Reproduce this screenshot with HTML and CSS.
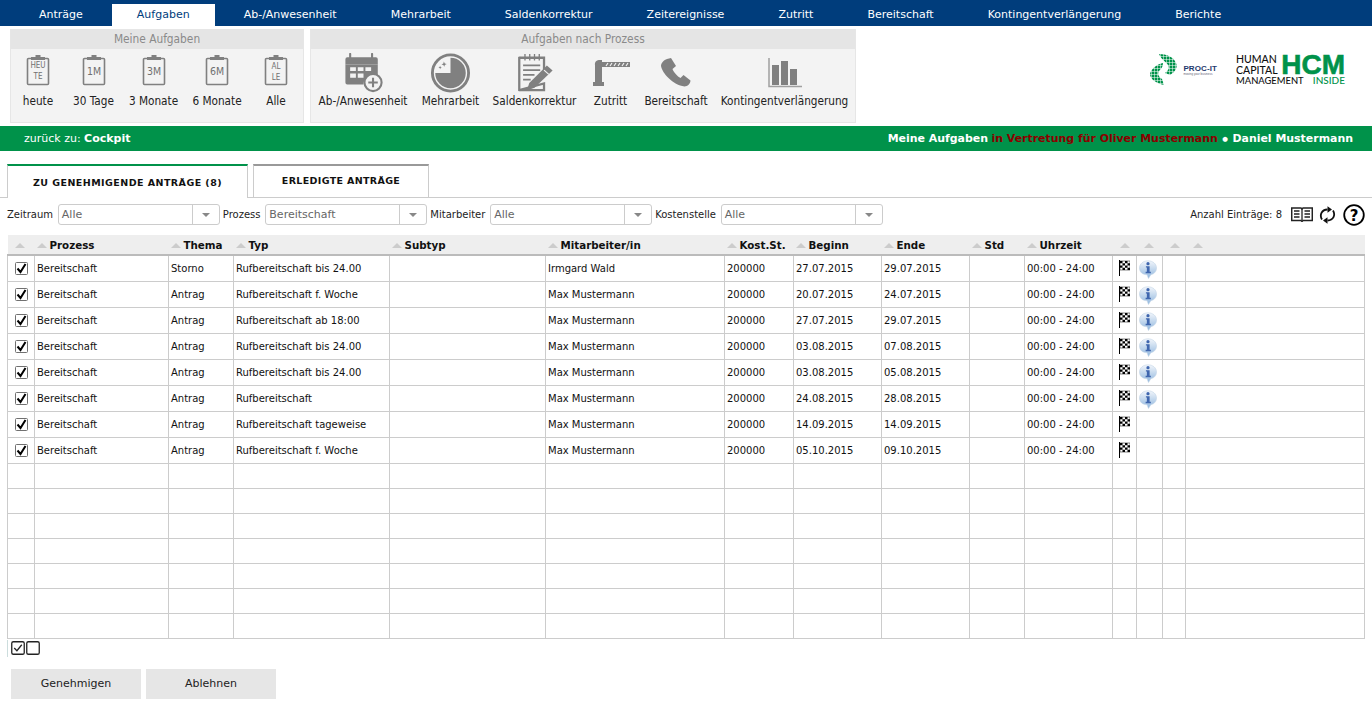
FILE: index.html
```html
<!DOCTYPE html>
<html lang="de">
<head>
<meta charset="utf-8">
<title>Aufgaben</title>
<link rel="stylesheet" href="styles.css">
</head>
<body>
<svg class="defs" width="0" height="0">
  <symbol id="clip" viewBox="0 0 24 32">
    <path d="M2.500 4.500h19a1 1 0 0 1 1 1v24a1 1 0 0 1-1 1h-19a1 1 0 0 1-1-1v-24a1 1 0 0 1 1-1z" fill="none" stroke="#808080" stroke-width="1.600"/>
    <path d="M5 5V3h4.500V1h5v2H19v3H5z" fill="#808080"/>
  </symbol>
  <symbol id="check" viewBox="0 0 13 13">
    <rect x=".5" y=".5" width="12" height="12" rx="1" fill="#fff" stroke="#707070"/>
    <path d="M2.500 6.500l3 3.500 5-8" fill="none" stroke="#000" stroke-width="2"/>
  </symbol>
  <symbol id="flag" viewBox="0 0 12 16">
    <path d="M1 0h1v16H1z" fill="#000"/>
    <path d="M2 1h10v9H2z" fill="#fff" stroke="#000" stroke-width=".5"/>
    <path d="M2 1h2.500v2.250H2zM7 1h2.500v2.250H7zM4.500 3.250H7V5.500H4.500zM9.500 3.250H12V5.500H9.500zM2 5.500h2.500v2.250H2zM7 5.500h2.500v2.250H7zM4.500 7.750H7V10H4.500zM9.500 7.750H12V10H9.500z" fill="#000"/>
  </symbol>
  <symbol id="info" viewBox="0 0 19 20">
    <defs>
      <linearGradient id="ig" x1="0" y1="0" x2="0" y2="1">
        <stop offset="0" stop-color="#f2f6fb"/>
        <stop offset="1" stop-color="#8fb6de"/>
      </linearGradient>
    </defs>
    <path d="M9.500 .8C14.500 .8 18.500 4 18.500 8.500S15 15 12.500 15.500L10 19.500 8.500 15.500C4 15.500 .5 13 .5 8.500S4.500 .8 9.500 .8z" fill="url(#ig)" stroke="#c3d4e6" stroke-width=".6"/>
    <circle cx="9.500" cy="3.800" r="1.700" fill="#3f66ae"/>
    <path d="M7.300 6.500h3.900v6h1.300V14H7v-1.500h1.300V8H7.300z" fill="#3f66ae"/>
  </symbol>
  <pattern id="dots" width="3" height="3" patternUnits="userSpaceOnUse">
    <rect width="2.500" height="2.500" fill="#00924a"/>
  </pattern>
</svg>

<nav class="topnav">
  <a class="navitem">Anträge</a>
  <a class="navitem active">Aufgaben</a>
  <a class="navitem">Ab-/Anwesenheit</a>
  <a class="navitem">Mehrarbeit</a>
  <a class="navitem">Saldenkorrektur</a>
  <a class="navitem">Zeitereignisse</a>
  <a class="navitem">Zutritt</a>
  <a class="navitem">Bereitschaft</a>
  <a class="navitem">Kontingentverlängerung</a>
  <a class="navitem">Berichte</a>
</nav>

<header class="ribbon">
  <section class="panel p1">
    <h2 class="panel-title">Meine Aufgaben</h2>
    <div class="panel-body b1">
      <div class="tool t-heute">
        <svg class="clip" viewBox="0 0 24 32"><use href="#clip"/><text class="ct" x="12" y="14">HEU</text><text class="ct" x="12" y="25">TE</text></svg>
        <span>heute</span>
      </div>
      <div class="tool t-30">
        <svg class="clip" viewBox="0 0 24 32"><use href="#clip"/><text class="cb" x="12" y="21">1M</text></svg>
        <span>30 Tage</span>
      </div>
      <div class="tool t-3">
        <svg class="clip" viewBox="0 0 24 32"><use href="#clip"/><text class="cb" x="12" y="21">3M</text></svg>
        <span>3 Monate</span>
      </div>
      <div class="tool t-6">
        <svg class="clip" viewBox="0 0 24 32"><use href="#clip"/><text class="cb" x="12" y="21">6M</text></svg>
        <span>6 Monate</span>
      </div>
      <div class="tool t-alle">
        <svg class="clip" viewBox="0 0 24 32"><use href="#clip"/><text class="ct" x="12" y="15">AL</text><text class="ct" x="12" y="26">LE</text></svg>
        <span>Alle</span>
      </div>
    </div>
  </section>
  <section class="panel p2">
    <h2 class="panel-title">Aufgaben nach Prozess</h2>
    <div class="panel-body b2">
      <div class="tool t-ab">
        <svg class="big" viewBox="0 0 42 42">
          <path d="M2 6.500a2 2 0 0 1 2-2h30a2 2 0 0 1 2 2V12H2z" fill="#808080"/>
          <path d="M5 12h31v12H26a11 11 0 0 0-5 9H4a2 2 0 0 1-2-2V12z" fill="#808080"/>
          <path d="M7 15h6v4H7zM15 15h6v4h-6zM23 15h6v4h-6zM7 21.500h6v4.500H7zM15 21.500h6v4.500h-6z" fill="#f3f3f3"/>
          <path d="M7 1v7M30 1v7" stroke="#808080" stroke-width="2.200" stroke-linecap="round"/>
          <circle cx="31" cy="31" r="9" fill="#f3f3f3" stroke="#808080" stroke-width="2.200"/>
          <path d="M31 26v10M26 31h10" stroke="#808080" stroke-width="2.200"/>
        </svg>
        <span>Ab-/Anwesenheit</span>
      </div>
      <div class="tool t-mehr">
        <svg class="big" viewBox="0 0 42 42">
          <circle cx="21" cy="21" r="19" fill="none" stroke="#808080" stroke-width="3"/>
          <path d="M21 5a16 16 0 1 1-16 16h16z" fill="#808080"/>
          <path d="M14 9l1 2 2 .5-2 1-.5 2-1-2-2-.5 2-1zM10 13.500l.6 1.300 1.300.4-1.300.6-.4 1.300-.6-1.300-1.300-.4 1.300-.6z" fill="#808080"/>
        </svg>
        <span>Mehrarbeit</span>
      </div>
      <div class="tool t-sal">
        <svg class="big" viewBox="0 0 42 42">
          <path d="M5 5h26v14M31 32v7H5z" fill="none" stroke="#808080" stroke-width="2.400"/>
          <path d="M5 4v36" stroke="#808080" stroke-width="2.400"/>
          <path d="M11 1v7M16 1v7M21 1v7M26 1v7" stroke="#808080" stroke-width="1.400"/>
          <path d="M9 13h18M9 18h18M9 23h12M9 28h8" stroke="#808080" stroke-width="2"/>
          <path d="M34 13l6 5.500-19 18-8 3 2.500-8z" fill="#808080"/>
          <path d="M31 18l5 4.500" stroke="#f3f3f3" stroke-width="1.200"/>
        </svg>
        <span>Saldenkorrektur</span>
      </div>
      <div class="tool t-zut">
        <svg class="barrier" viewBox="0 0 38 26">
          <path d="M3 5a4 4 0 0 1 4-5h3v24H3z" fill="#808080"/>
          <path d="M1 22h11v4H1z" fill="#808080"/>
          <path d="M10 2h28v5H10z" fill="#808080"/>
          <path d="M14 6l2-3M18 6l2-3M22 6l2-3M26 6l2-3M30 6l2-3M34 6l2-3" stroke="#f3f3f3" stroke-width="1.200"/>
        </svg>
        <span>Zutritt</span>
      </div>
      <div class="tool t-ber">
        <svg class="phone" viewBox="0 0 30 30">
          <path d="M6 1l4-1 5 8-3.500 3c1 3 5 7.500 8 9l3-3 7 5.500c0 3-3 6-6 6C12 27 1 15 0 8c0-3 3-6 6-7z" fill="#808080"/>
        </svg>
        <span>Bereitschaft</span>
      </div>
      <div class="tool t-kon">
        <svg class="chart" viewBox="0 0 34 30">
          <path d="M1 0v28.500h33" fill="none" stroke="#a0a0a0" stroke-width="1.500"/>
          <path d="M4 7h7v20H4zM13 3h7v24h-7zM22 11h7v16h-7z" fill="#808080"/>
        </svg>
        <span>Kontingentverlängerung</span>
      </div>
    </div>
  </section>
  <div class="logos">
    <div class="procit">
      <svg class="globe" viewBox="0 0 28 31">
        <path d="M10 0c7 0 15 3 17 9 2 5-1 9-6 12l-5-2c3-2 5-5 3-8-2-3-7-6-9-11z" fill="url(#dots)"/>
        <path d="M14 9c-5 1-12 5-13 11 0 5 6 9 14 11l-2-6c-3-2-5-5-3-8 2-2 4-4 4-8z" fill="url(#dots)"/>
      </svg>
      <div class="procit-text"><b>PROC-IT</b><small>moving your business</small></div>
    </div>
    <div class="hcm">
      <div class="hcm-row">
        <div class="hcm-words"><span>HUMAN</span><span>CAPITAL</span></div>
        <b class="hcm-mark">HCM</b>
      </div>
      <div class="hcm-row hcm-low">
        <span class="hcm-man">MANAGEMENT</span>
        <span class="hcm-ins">INSIDE</span>
      </div>
    </div>
  </div>
</header>

<div class="greenbar">
  <div class="back">zurück zu: <b>Cockpit</b></div>
  <div class="context"><b>Meine Aufgaben</b> <b class="red">in Vertretung für Oliver Mustermann</b> <b class="dot">●</b> <b>Daniel Mustermann</b></div>
</div>

<div class="tabs">
  <div class="tab on">ZU GENEHMIGENDE ANTRÄGE (8)</div>
  <div class="tab off">ERLEDIGTE ANTRÄGE</div>
</div>

<div class="filters">
  <label class="flabel">Zeitraum</label>
  <div class="combo"><span>Alle</span><i></i></div>
  <label class="flabel">Prozess</label>
  <div class="combo"><span>Bereitschaft</span><i></i></div>
  <label class="flabel">Mitarbeiter</label>
  <div class="combo"><span>Alle</span><i></i></div>
  <label class="flabel">Kostenstelle</label>
  <div class="combo"><span>Alle</span><i></i></div>
  <div class="filters-right">
    <span class="count">Anzahl Einträge: 8</span>
    <svg class="i-book" viewBox="0 0 22 15">
      <path d="M.7 1h9.300l1 1 1-1h9.300v12.500H12l-1 1-1-1H.7z" fill="none" stroke="#222" stroke-width="1.500"/>
      <path d="M11 2v11M3 4h5.500M3 7h5.500M3 10h5.500M13.500 4H19M13.500 7H19M13.500 10H19" stroke="#222" stroke-width="1.300"/>
    </svg>
    <svg class="i-ref" viewBox="0 0 16 20">
      <path d="M2.500 14.500C-.2 10 2 4.800 8 4.500M13.500 5.500C16.200 10 14 15.200 8 15.500" fill="none" stroke="#111" stroke-width="1.800"/>
      <path d="M8 1.200v6.600l4.500-3.300zM8 18.800v-6.600l-4.500 3.300z" fill="#111"/>
    </svg>
    <svg class="i-help" viewBox="0 0 22 22">
      <circle cx="11" cy="11" r="9.800" fill="#fff" stroke="#000" stroke-width="1.800"/>
      <text x="11" y="16.500" class="qm">?</text>
    </svg>
  </div>
</div>

<table class="grid">
  <colgroup>
    <col class="c1"><col class="c2"><col class="c3"><col class="c4"><col class="c5"><col class="c6"><col class="c7"><col class="c8"><col class="c9"><col class="c10"><col class="c11"><col class="c12"><col class="c13"><col class="c14"><col class="c15">
  </colgroup>
  <thead>
    <tr>
      <th class="so"></th><th>Prozess</th><th>Thema</th><th>Typ</th><th>Subtyp</th><th>Mitarbeiter/in</th><th>Kost.St.</th><th>Beginn</th><th>Ende</th><th>Std</th><th>Uhrzeit</th><th class="so"></th><th class="so"></th><th class="so"></th><th class="so"></th>
    </tr>
  </thead>
  <tbody>
    <tr><td class="ck"><svg class="cb-i"><use href="#check"/></svg></td><td>Bereitschaft</td><td>Storno</td><td>Rufbereitschaft bis 24.00</td><td></td><td>Irmgard Wald</td><td>200000</td><td>27.07.2015</td><td>29.07.2015</td><td></td><td>00:00 - 24:00</td><td class="ic"><svg class="fl"><use href="#flag"/></svg></td><td class="ic"><svg class="in"><use href="#info"/></svg></td><td></td><td></td></tr>
    <tr><td class="ck"><svg class="cb-i"><use href="#check"/></svg></td><td>Bereitschaft</td><td>Antrag</td><td>Rufbereitschaft f. Woche</td><td></td><td>Max Mustermann</td><td>200000</td><td>20.07.2015</td><td>24.07.2015</td><td></td><td>00:00 - 24:00</td><td class="ic"><svg class="fl"><use href="#flag"/></svg></td><td class="ic"><svg class="in"><use href="#info"/></svg></td><td></td><td></td></tr>
    <tr><td class="ck"><svg class="cb-i"><use href="#check"/></svg></td><td>Bereitschaft</td><td>Antrag</td><td>Rufbereitschaft ab 18:00</td><td></td><td>Max Mustermann</td><td>200000</td><td>27.07.2015</td><td>29.07.2015</td><td></td><td>00:00 - 24:00</td><td class="ic"><svg class="fl"><use href="#flag"/></svg></td><td class="ic"><svg class="in"><use href="#info"/></svg></td><td></td><td></td></tr>
    <tr><td class="ck"><svg class="cb-i"><use href="#check"/></svg></td><td>Bereitschaft</td><td>Antrag</td><td>Rufbereitschaft bis 24.00</td><td></td><td>Max Mustermann</td><td>200000</td><td>03.08.2015</td><td>07.08.2015</td><td></td><td>00:00 - 24:00</td><td class="ic"><svg class="fl"><use href="#flag"/></svg></td><td class="ic"><svg class="in"><use href="#info"/></svg></td><td></td><td></td></tr>
    <tr><td class="ck"><svg class="cb-i"><use href="#check"/></svg></td><td>Bereitschaft</td><td>Antrag</td><td>Rufbereitschaft bis 24.00</td><td></td><td>Max Mustermann</td><td>200000</td><td>03.08.2015</td><td>05.08.2015</td><td></td><td>00:00 - 24:00</td><td class="ic"><svg class="fl"><use href="#flag"/></svg></td><td class="ic"><svg class="in"><use href="#info"/></svg></td><td></td><td></td></tr>
    <tr><td class="ck"><svg class="cb-i"><use href="#check"/></svg></td><td>Bereitschaft</td><td>Antrag</td><td>Rufbereitschaft</td><td></td><td>Max Mustermann</td><td>200000</td><td>24.08.2015</td><td>28.08.2015</td><td></td><td>00:00 - 24:00</td><td class="ic"><svg class="fl"><use href="#flag"/></svg></td><td class="ic"><svg class="in"><use href="#info"/></svg></td><td></td><td></td></tr>
    <tr><td class="ck"><svg class="cb-i"><use href="#check"/></svg></td><td>Bereitschaft</td><td>Antrag</td><td>Rufbereitschaft tageweise</td><td></td><td>Max Mustermann</td><td>200000</td><td>14.09.2015</td><td>14.09.2015</td><td></td><td>00:00 - 24:00</td><td class="ic"><svg class="fl"><use href="#flag"/></svg></td><td></td><td></td><td></td></tr>
    <tr><td class="ck"><svg class="cb-i"><use href="#check"/></svg></td><td>Bereitschaft</td><td>Antrag</td><td>Rufbereitschaft f. Woche</td><td></td><td>Max Mustermann</td><td>200000</td><td>05.10.2015</td><td>09.10.2015</td><td></td><td>00:00 - 24:00</td><td class="ic"><svg class="fl"><use href="#flag"/></svg></td><td></td><td></td><td></td></tr>
    <tr class="empty"><td></td><td></td><td></td><td></td><td></td><td></td><td></td><td></td><td></td><td></td><td></td><td></td><td></td><td></td><td></td></tr>
    <tr class="empty"><td></td><td></td><td></td><td></td><td></td><td></td><td></td><td></td><td></td><td></td><td></td><td></td><td></td><td></td><td></td></tr>
    <tr class="empty"><td></td><td></td><td></td><td></td><td></td><td></td><td></td><td></td><td></td><td></td><td></td><td></td><td></td><td></td><td></td></tr>
    <tr class="empty"><td></td><td></td><td></td><td></td><td></td><td></td><td></td><td></td><td></td><td></td><td></td><td></td><td></td><td></td><td></td></tr>
    <tr class="empty"><td></td><td></td><td></td><td></td><td></td><td></td><td></td><td></td><td></td><td></td><td></td><td></td><td></td><td></td><td></td></tr>
    <tr class="empty"><td></td><td></td><td></td><td></td><td></td><td></td><td></td><td></td><td></td><td></td><td></td><td></td><td></td><td></td><td></td></tr>
    <tr class="empty"><td></td><td></td><td></td><td></td><td></td><td></td><td></td><td></td><td></td><td></td><td></td><td></td><td></td><td></td><td></td></tr>
  </tbody>
</table>

<div class="selectall">
  <svg class="sa" viewBox="0 0 13 13"><rect x=".7" y=".7" width="11.600" height="11.600" rx="1.500" fill="#fff" stroke="#222" stroke-width="1.200"/><path d="M3 6.500l2.500 2.500 4.500-5.500" fill="none" stroke="#222" stroke-width="1.200"/></svg>
  <svg class="sa" viewBox="0 0 13 13"><rect x=".7" y=".7" width="11.600" height="11.600" rx="1.500" fill="#fff" stroke="#222" stroke-width="1.200"/></svg>
</div>

<div class="actions">
  <button class="btn">Genehmigen</button>
  <button class="btn">Ablehnen</button>
</div>
</body>
</html>
```
FILE: styles.css
```css
* { box-sizing: border-box; }
html, body { margin: 0; padding: 0; }
body { width: 1372px; height: 711px; overflow: hidden; background: #fff; font-family: "DejaVu Sans", Verdana, sans-serif; font-size: 10px; color: #222; }
.defs { position: absolute; }

.topnav { height: 26px; background: #003d7c; display: flex; align-items: flex-end; padding-left: 14px; gap: 4px; }
.navitem { height: 22px; line-height: 21px; padding: 0 25px; font-size: 11px; color: #fff; white-space: nowrap; }
.navitem.active { background: #fff; color: #003d7c; }

.ribbon { height: 100px; display: flex; padding: 3px 0 3px 10px; gap: 6px; }
.panel { height: 94px; background: #f3f3f3; border: 1px solid #e6e6e6; display: flex; flex-direction: column; }
.p1 { width: 294px; }
.p2 { width: 546px; }
.panel-title { margin: 0; height: 19px; background: #e5e5e5; font-family: "DejaVu Sans Condensed", "DejaVu Sans", sans-serif; font-stretch: condensed; font-weight: normal; font-size: 11.800px; line-height: 18px; color: #8a8a8a; text-align: center; }
.panel-body { flex: 1; display: flex; }
.tool { display: flex; flex-direction: column; align-items: center; font-family: "DejaVu Sans Condensed", "DejaVu Sans", sans-serif; font-stretch: condensed; font-size: 11.700px; color: #222; white-space: nowrap; }
.tool span { display: block; line-height: 15px; padding-top: 1px; }
.b1 { padding: 5px 0 0 12px; }
.b2 { padding: 4px 0 0 7px; }
.clip { width: 24px; height: 32px; margin-bottom: 7px; display: block; flex: none; }
.ct { font-family: "DejaVu Sans Condensed", "DejaVu Sans", sans-serif; font-size: 8px; fill: #707070; text-anchor: middle; }
.cb { font-family: "DejaVu Sans Condensed", "DejaVu Sans", sans-serif; font-size: 10.500px; fill: #707070; text-anchor: middle; }
.t-heute { width: 30px; }
.t-30 { width: 43px; margin-left: 19px; }
.t-3 { width: 49px; margin-left: 14px; }
.t-6 { width: 50px; margin-left: 14px; }
.t-alle { width: 20px; margin-left: 24px; }
.big { width: 41px; height: 40px; display: block; flex: none; }
.t-ab { width: 90px; }
.t-mehr { width: 57px; margin-left: 14px; }
.t-sal { width: 85px; margin-left: 13px; }
.t-zut { width: 33px; margin-left: 17px; }
.t-ber { width: 62px; margin-left: 18px; }
.t-kon { width: 127px; margin-left: 14px; }
.barrier { width: 38px; height: 26px; margin: 7px 0; display: block; flex: none; }
.phone { width: 30px; height: 30px; margin: 5px 0; display: block; flex: none; }
.chart { width: 34px; height: 30px; margin: 5px 0; display: block; flex: none; }

.logos { margin-left: auto; display: flex; align-items: flex-start; padding: 25px 27px 0 0; gap: 19px; }
.procit { display: flex; align-items: center; gap: 6px; height: 31px; }
.globe { width: 28px; height: 31px; }
.procit-text { display: flex; flex-direction: column; line-height: 1; padding-top: 2px; }
.procit-text b { font-family: "Liberation Sans", sans-serif; font-size: 8px; color: #1f3a6e; letter-spacing: .1px; }
.procit-text small { font-family: "Liberation Sans", sans-serif; font-size: 3px; color: #667; }
.hcm { width: 109px; display: flex; flex-direction: column; font-family: "Lato", "Liberation Sans", sans-serif; }
.hcm-row { display: flex; justify-content: space-between; }
.hcm-words { display: flex; flex-direction: column; font-size: 10.500px; line-height: 11px; color: #111; font-weight: 500; }
.hcm-mark { font-family: "Liberation Sans", sans-serif; font-size: 28px; line-height: 22px; height: 22px; color: #00924a; -webkit-text-stroke: .6px #00924a; }
.hcm-low { line-height: 9px; }
.hcm-man { font-size: 9.400px; color: #111; font-weight: 500; }
.hcm-ins { font-size: 10px; color: #00924a; font-weight: 500; }

.greenbar { height: 25px; background: #00924a; color: #fff; display: flex; justify-content: space-between; align-items: center; padding: 0 19px 1px 24px; white-space: nowrap; }
.back { font-size: 11px; }
.context { font-size: 10.950px; }
.red { color: #8b0000; }
.dot { font-size: 6.500px; vertical-align: 1px; margin: 0 1px; }

.tabs { height: 47px; padding: 13px 0 0 7px; display: flex; gap: 5px; border-bottom: 1px solid #ccc; }
.tab { background: #fff; font-size: 9.500px; font-weight: bold; letter-spacing: .45px; color: #111; text-align: center; border: 1px solid #ccc; border-bottom: none; }
.tab.on { width: 241px; height: 34px; border-top: 2px solid #00924a; line-height: 33px; }
.tab.off { width: 176px; height: 33px; border-top: 2px solid #999; line-height: 30px; letter-spacing: .35px; }

.filters { display: flex; align-items: center; height: 21px; margin-top: 6px; padding-left: 7px; }
.flabel { font-size: 10px; color: #222; margin-right: 4.800px; white-space: nowrap; }
.combo { width: 162px; height: 21px; border: 1px solid #ccc; border-radius: 3px; display: flex; align-items: center; justify-content: space-between; padding-left: 3px; margin-right: 3px; background: #fff; font-size: 11px; color: #666; }
.combo span { line-height: 18px; }
.combo i { width: 27px; height: 19px; border-left: 1px solid #ccc; position: relative; flex: none; }
.combo i::after { content: ""; position: absolute; left: 9px; top: 8px; border-style: solid; border-width: 4px 4px 0; border-color: #888 transparent transparent; }
.filters-right { margin-left: auto; display: flex; align-items: center; padding-right: 7px; }
.count { font-size: 10px; margin-right: 9px; color: #222; }
.i-book { width: 22px; height: 15px; margin-right: 6px; }
.i-ref { width: 17px; height: 20px; margin-right: 7px; }
.i-help { width: 22px; height: 22px; }
.qm { font-family: "DejaVu Sans", sans-serif; font-weight: bold; font-size: 15px; text-anchor: middle; fill: #000; }

.grid { margin: 10px 0 0 7px; border-collapse: collapse; table-layout: fixed; width: 1357px; font-size: 10px; color: #111; }
.c1 { width: 27px; } .c2 { width: 134px; } .c3 { width: 65px; } .c4 { width: 156px; } .c5 { width: 156px; } .c6 { width: 179px; } .c7 { width: 69px; } .c8 { width: 88px; } .c9 { width: 88px; } .c10 { width: 55px; } .c11 { width: 88px; } .c12 { width: 24px; } .c13 { width: 26px; } .c14 { width: 23px; } .c15 { width: 179px; }
.grid th { height: 20px; background: #eee; border-bottom: 2px solid #bbb; text-align: left; font-size: 10.300px; font-weight: bold; padding: 1px 0 0 2px; color: #111; white-space: nowrap; }
.grid th::before { content: ""; display: inline-block; border-style: solid; border-width: 0 5.500px 5px; border-color: transparent transparent #ccc; margin: 0 3px 1px 0; }
.grid th.so { padding-left: 7px; }
.grid td { height: 26px; border: 1px solid #ccc; padding: 0 0 0 2px; white-space: nowrap; overflow: hidden; }
.grid .empty td { height: 25px; }
.grid td.ck { padding: 0 0 0 7px; }
.grid td.ic { padding: 0 0 0 2px; vertical-align: top; }
.cb-i { width: 13px; height: 13px; display: block; }
.fl { width: 12px; height: 16px; display: block; margin: 4px 0 0 3px; }
.in { width: 18px; height: 19px; display: block; margin: 4px 0 0 0; }

.selectall { display: flex; gap: 1px; height: 17px; align-items: center; padding-left: 3px; margin: 1px 0 0 7px; border-left: 1px solid #cdd; width: 50px; }
.sa { width: 14px; height: 14px; }
.actions { display: flex; gap: 5px; padding: 12px 0 0 11px; }
.btn { width: 130px; height: 30px; background: #e6e6e6; border: none; font-family: "DejaVu Sans", sans-serif; font-size: 11px; color: #222; padding: 0; }
```
